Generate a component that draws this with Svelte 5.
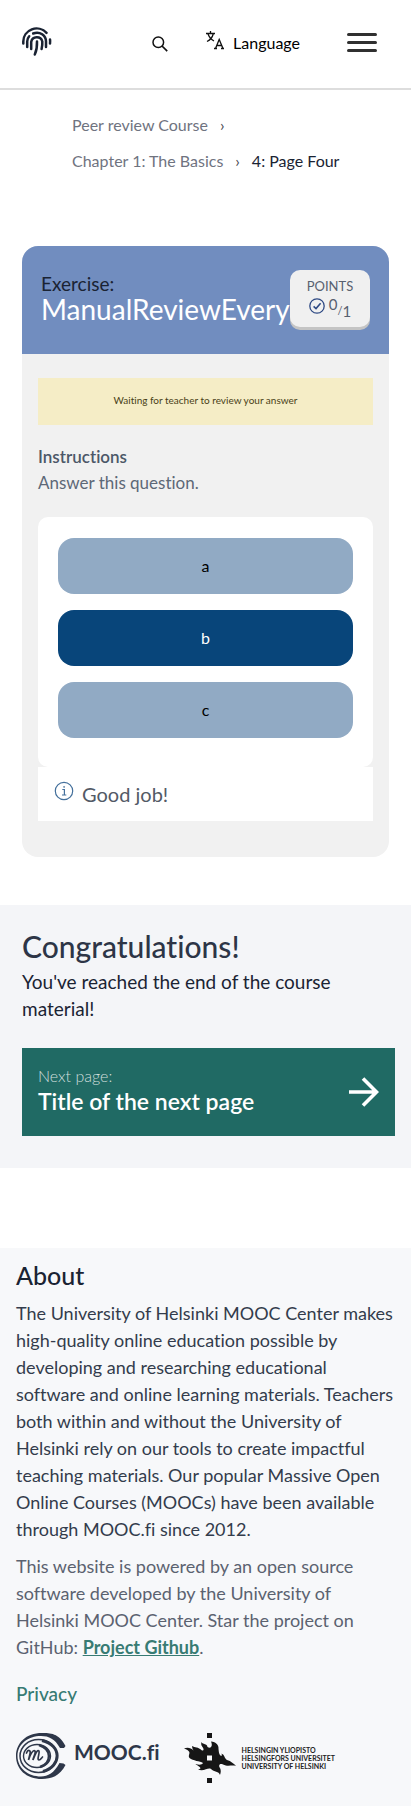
<script>
  const options = ['a', 'b', 'c'];
  let selected = $state('b');
</script>

<div class="page">
  <header>
    <a class="home" href="#home" aria-label="Home">
      <svg width="30" height="30" viewBox="0 0 30 30" fill="none" stroke="#1a2333" stroke-width="2.5" stroke-linecap="round">
        <path d="M1.3 16.500V14.500A13.300 13 0 0 1 24.500 5.800" />
        <path d="M28 12.500Q28.300 14.500 28 16.500" />
        <path d="M5.200 20V14.500Q5.200 11.500 7.200 9.200" />
        <path d="M11.200 6.500C18 4 24 8.500 24 14.500V20" />
        <path d="M9.200 22V15A5.700 5.700 0 0 1 20.300 14.500Q20.500 18 19.600 22" />
        <path d="M15 14.500Q15.300 22 12.800 27.500" />
      </svg>
    </a>
    <div class="tools">
      <button class="search" aria-label="Search">
        <svg width="16" height="16" viewBox="0 0 16 16" fill="none" stroke="#111" stroke-width="1.500">
          <circle cx="6.300" cy="6.300" r="5.300" />
          <path d="M10 10L15.200 15.200" stroke-width="1.700" />
        </svg>
      </button>
      <button class="language">
        <svg width="18" height="19" viewBox="0 0 18 19" fill="none" stroke="#111" stroke-width="1.300">
          <path d="M0 2.500H9M4.500 0V2.500M2 3Q4 8 8 10M7.200 3Q6 8 1 10.500" />
          <path d="M9.500 17.500L13.200 8.500L17 17.500M10.800 14.500H15.700M8 17.500H11M15 17.500H18" />
        </svg>
        <span>Language</span>
      </button>
      <button class="menu" aria-label="Menu"><i></i><i></i><i></i></button>
    </div>
  </header>

  <nav aria-label="Breadcrumb">
    <span class="crumb"><a href="#course">Peer review Course</a><b>›</b></span>
    <span class="crumb"><a href="#chapter">Chapter 1: The Basics</a><b>›</b></span>
    <span class="current">4: Page Four</span>
  </nav>

  <section class="exercise">
    <div class="exercise-head">
      <h2><span>Exercise:</span>ManualReviewEvery</h2>
      <div class="points">
        <div class="points-label">POINTS</div>
        <div class="score">
          <svg width="16" height="16" viewBox="0 0 16 16" fill="none" stroke="#2f4a84" stroke-width="1.300">
            <circle cx="8" cy="8" r="7.200" />
            <path d="M4.600 8.400L7 10.500L11.600 5.300" stroke-width="1.600" />
          </svg>
          <span><sup>0</sup><small>/</small><sub>1</sub></span>
        </div>
      </div>
    </div>
    <div class="exercise-body">
      <div class="waiting">Waiting for teacher to review your answer</div>
      <h3>Instructions</h3>
      <p class="assignment">Answer this question.</p>
      <div class="options">
        {#each options as option}
          <button class:selected={selected === option} aria-pressed={selected === option} onclick={() => (selected = option)}>{option}</button>
        {/each}
      </div>
      <div class="feedback">
        <svg width="20" height="20" viewBox="0 0 20 20" fill="none" stroke="#44709c" stroke-width="1.200">
          <circle cx="10" cy="10" r="8.700" />
          <path d="M8.300 8.500H10.400V13.800M8 14H12.300" />
          <circle cx="10.100" cy="5.900" r=".6" fill="#44709c" stroke-width=".5" />
        </svg>
        <span>Good job!</span>
      </div>
    </div>
  </section>

  <section class="finish">
    <h2>Congratulations!</h2>
    <p>You've reached the end of the course material!</p>
    <a class="next" href="#next">
      <span><small>Next page:</small><strong>Title of the next page</strong></span>
      <svg width="30" height="30" viewBox="0 0 30 30" fill="none" stroke="#fff" stroke-width="3.600">
        <path d="M0 15H27M14 1.500L27.500 15L14 28.500" />
      </svg>
    </a>
  </section>

  <footer>
    <h2>About</h2>
    <p>The University of Helsinki MOOC Center makes high-quality online education possible by developing and researching educational software and online learning materials. Teachers both within and without the University of Helsinki rely on our tools to create impactful teaching materials. Our popular Massive Open Online Courses (MOOCs) have been available through MOOC.fi since 2012.</p>
    <p class="source">This website is powered by an open source software developed by the University of Helsinki MOOC Center. Star the project on GitHub: <a href="#github">Project Github</a>.</p>
    <a class="privacy" href="#privacy">Privacy</a>
    <div class="logos">
      <a class="mooc" href="#mooc">
        <svg width="50" height="46" viewBox="0 0 50 46" fill="none" stroke="#2e3749">
          <path fill="#2e3749" stroke="none" d="M49.500 13C43 0 34 0 26 0C10 0 0 10 0 23C0 36 10 46 26 46C35 46 44 43 49.500 32L47.500 30.500L43.500 30C38 40 32 43.500 25 43.500C12 43.500 1.500 35 1.500 23C1.500 11 12 3 25 3C33 3 39 6 44 15L48 15Z" />
          <ellipse cx="22.500" cy="23" rx="18.500" ry="16.500" stroke-width="1.500" />
          <path d="M26 7.500C46 12 46 33 27 38.500" stroke-width="3" />
          <ellipse cx="21" cy="23" rx="13.500" ry="11.500" stroke-width="1.400" />
          <path d="M23 12C36 16 36 30 24 34" stroke-width="2.400" />
          <path d="M10.500 20C12 16 15 17 14 21L12.500 27C14 22 17 16 19 18C20 20 17 25 17 27C19 22 21 16 23 18C24 20 20.500 27 23 27C24.500 27 25.500 25 26.500 24" stroke-width="1.700" stroke-linecap="round" />
        </svg>
        <span>MOOC.fi</span>
      </a>
      <a class="helsinki" href="#helsinki">
        <svg width="52" height="50" viewBox="0 0 52 50" fill="#161616">
          <path d="M23 0h5v5h-5zM23 45h5v5h-5z" />
          <path fill-rule="evenodd" d="M0 15.500C3 14 7 14.500 9.500 17.500C8.500 16 8 14.500 8 13C11 15 14 13.500 18 17.500C20 18 20 16 18.500 14C17 12.500 17 10.500 17.500 9C19 12 23 10 23.500 14C27 16 29 13 27 8.500C32 9 35 12 34.500 16C35 20 35 21 37 23C38 23 38 22 37.500 20.500C41 22 40 25 43 27C47 28 50 31 52 33C48 31.500 44 34 39 31.500C36 30 34 32 36 35C37 37 37 39 36 42C35 38 30 39 27 36C24 34 20 39 14 36.500C17 36 17 35 15 33.500C13 32 12 32 11.500 31C15 32 18 32 19 30C16 28 9 28 5.500 25C3.500 22.500 7 20 4.500 18C3 16.500 2 16 0 15.500ZM23 22.500h5v5h-5z" />
        </svg>
        <span>HELSINGIN YLIOPISTO<br />HELSINGFORS UNIVERSITET<br />UNIVERSITY OF HELSINKI</span>
      </a>
    </div>
  </footer>
</div>

<style>
  :global(body) { margin: 0; background: #fff; }
  .page { font-family: Lato, sans-serif; color: #1a2333; font-variant-ligatures: none; }
  .page * { box-sizing: border-box; }
  h2, h3, p { margin: 0; font-weight: 500; }
  svg { display: block; flex: none; }
  a { text-decoration: none; color: inherit; }
  button { border: 0; padding: 0; background: none; font: inherit; font-variant-ligatures: none; color: #000; cursor: pointer; }
  header { height: 90px; border-bottom: 2px solid #ddd; padding: 0 34px 4px 22px; display: flex; align-items: center; justify-content: space-between; }
  .tools { display: flex; align-items: center; }
  .search { margin-right: 38px; padding-top: 3px; }
  .language { display: flex; align-items: center; gap: 9px; font-size: 16px; line-height: 24px; margin-right: 47px; }
  .language svg { margin-bottom: 4px; }
  .language span { padding-top: 1px; }
  .menu { width: 30px; display: grid; gap: 5px; }
  .menu i { height: 3px; border-radius: 2px; background: #303030; }
  nav { padding: 17px 48px 67px 72px; display: flex; flex-wrap: wrap; font-size: 16px; line-height: 36px; color: #6f737f; }
  .crumb:first-child { width: 100%; }
  .crumb b { font-weight: 400; padding: 0 12px; color: #45474f; }
  .current { color: #1a2333; }
  .exercise { margin: 0 22px 48px; border-radius: 16px; overflow: hidden; background: #f1f1f1; }
  .exercise-head { height: 108px; padding: 24px 19px; display: flex; justify-content: space-between; background: #718dbf; }
  .exercise-head h2 { flex: 1; min-width: 0; white-space: nowrap; padding-top: 2px; color: #fff; font-size: 28px; line-height: 26px; font-weight: 400; }
  .exercise-head h2 span { display: block; font-size: 19px; line-height: 24px; color: #1a2333; }
  .points { position: relative; width: 80px; height: 57px; padding-top: 7px; border-radius: 10px; background: #f0f0f0; box-shadow: 0 3px 0 #c4c4c4; text-align: center; color: #57606f; }
  .points-label { font-size: 13px; line-height: 18px; }
  .score { display: flex; justify-content: center; gap: 4px; padding-top: 3px; line-height: 16px; }
  .score sup, .score sub { font-size: 15px; line-height: 0; }
  .score sup { vertical-align: 2px; }
  .score sub { vertical-align: -5px; }
  .score small { font-size: 11px; vertical-align: -3px; line-height: 0; }
  .exercise-body { padding: 24px 16px 36px; }
  .waiting { padding: 13px 14px 15px; background: #f5edc6; text-align: center; font-size: 10px; line-height: 19px; margin-bottom: 20px; color: #493f17; }
  h3 { font-size: 17px; line-height: 24px; font-weight: 600; color: #4c5868; }
  .assignment { font-size: 17px; line-height: 28px; margin-bottom: 20px; color: #5d6877; font-weight: 400; }
  .options { padding: 21px 20px 29px; display: grid; gap: 16px; border-radius: 10px; background: #fff; }
  .options button { height: 56px; padding-bottom: 2px; border-radius: 16px; background: #91aac4; font-size: 16px; }
  .options .selected { background: #08457a; color: #fff; }
  .feedback { display: flex; gap: 8px; padding: 14px 16px; background: #fff; color: #535a66; font-size: 20px; line-height: 26px; }
  .finish { padding: 24px 16px 32px 22px; background: #f4f5f8; margin-bottom: 80px; }
  .finish h2 { font-size: 30px; line-height: 34px; color: #2d3547; }
  .finish p { font-size: 19px; line-height: 27px; margin: 5px 16px 26px 0; font-weight: 400; }
  .next { padding: 16px; display: flex; align-items: center; justify-content: space-between; background: #206a64; color: #fff; }
  .next span { display: grid; padding-bottom: 6px; }
  .next small { font-size: 16px; line-height: 24px; color: #d0dfdd; font-weight: 300; }
  .next strong { font-size: 23px; line-height: 26px; font-weight: 600; }
  footer { padding: 12px 16px 23px; background: #f7f8fa; }
  footer h2 { font-size: 25px; line-height: 30px; margin-bottom: 10px; }
  footer p { font-size: 18px; line-height: 27px; font-weight: 400; color: #333c4c; }
  footer .source { margin: 10px 0 18px; color: #5b6270; }
  .source a { color: #377b73; font-weight: 700; text-decoration: underline; }
  .privacy { display: block; font-size: 19px; line-height: 30px; color: #377b73; font-weight: 500; }
  .logos { display: flex; align-items: center; gap: 24px; margin-top: 24px; }
  .mooc, .helsinki { display: flex; align-items: center; gap: 8px; }
  .mooc svg { margin-bottom: 4px; }
  .mooc span { font-size: 21px; line-height: 26px; font-weight: 700; color: #2e3749; padding-bottom: 12px; }
  .helsinki { gap: 6px; }
  .helsinki span { font-size: 7px; line-height: 8px; font-weight: 700; color: #222; white-space: nowrap; }
</style>
